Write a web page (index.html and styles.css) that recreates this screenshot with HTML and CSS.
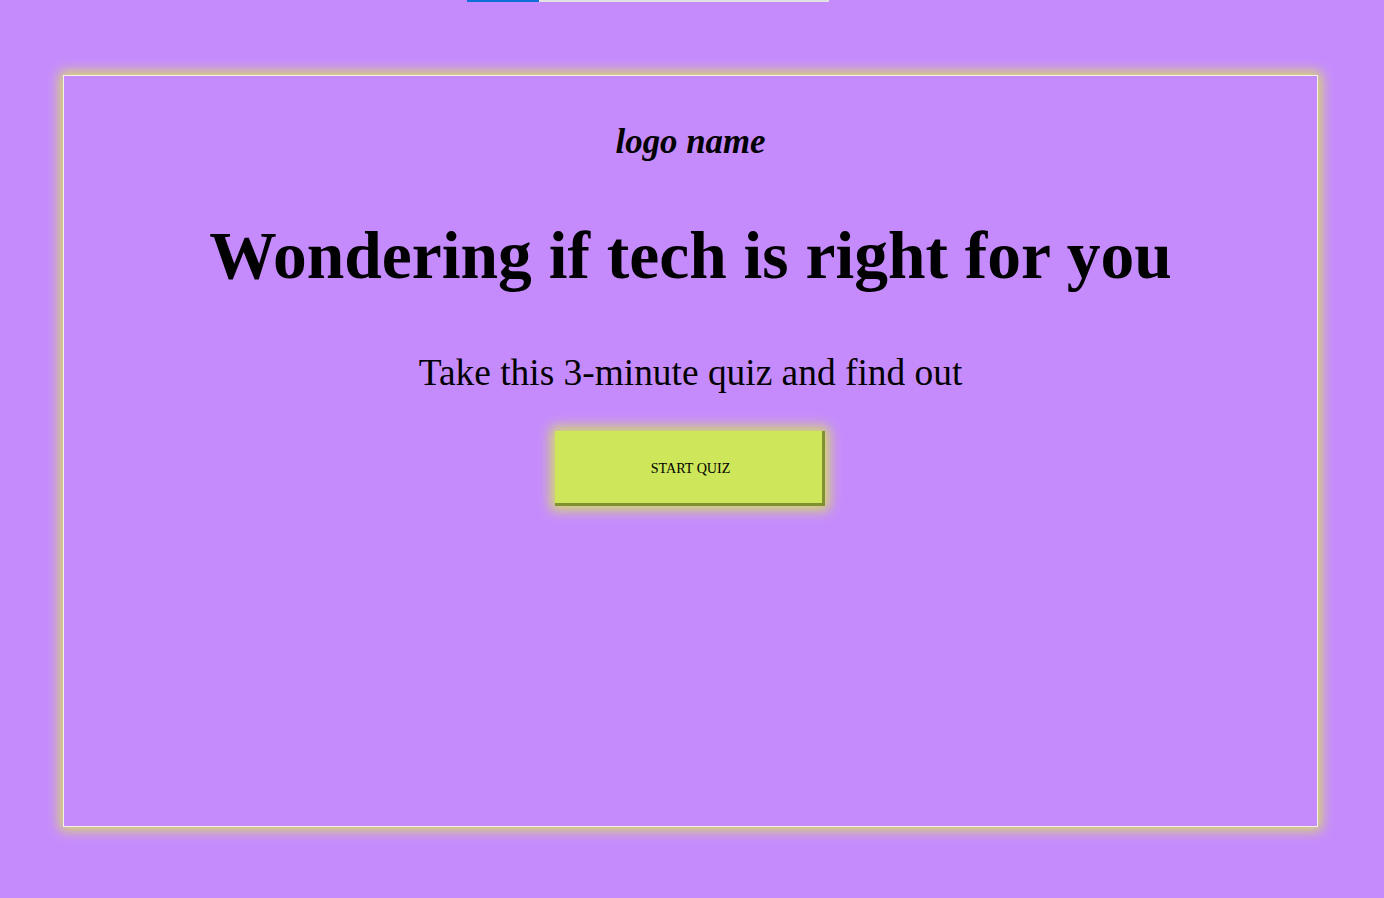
FILE: index.html
```html
<!DOCTYPE html>
<html lang="en">
<head>
<meta charset="utf-8">
<title>Quiz</title>
<link rel="stylesheet" href="styles.css">
</head>
<body>
<div class="progress"><div class="progress-fill" style="width:20%"></div></div>
<main class="card">
  <div class="logo">logo name</div>
  <h1 class="title">Wondering if tech is right for you</h1>
  <p class="subtitle">Take this 3-minute quiz and find out</p>
  <button class="start">START QUIZ</button>
</main>
</body>
</html>
```
FILE: styles.css
```css
html, body {
  margin: 0;
  padding: 0;
}
body {
  background: #c58bfd;
  font-family: "Liberation Serif", "Times New Roman", serif;
  color: #000;
  height: 898px;
  overflow: hidden;
}
.progress {
  width: 362px;
  height: 2px;
  margin-left: 467px;
  background: #e2e2e2;
}
.progress-fill {
  height: 100%;
  background: #0f6fd9;
}
.card {
  margin: 73px 0 0 63px;
  width: 1253px;
  height: 750px;
  border: 1px solid #f4f2e8;
  box-shadow: 0 0 12px 3px #dbe25a;
  display: flex;
  flex-direction: column;
  align-items: center;
  text-align: center;
}
.logo {
  font-size: 34.8px;
  font-weight: bold;
  font-style: italic;
  margin-top: 46px;
  line-height: 1.15;
}
.title {
  font-size: 67.5px;
  font-weight: bold;
  margin: 55px 0 0;
  line-height: 1.15;
}
.subtitle {
  font-size: 37.4px;
  margin: 56px 0 0;
  line-height: 1.15;
}
.start {
  box-sizing: border-box;
  margin-top: 37px;
  margin-right: 1px;
  width: 270px;
  height: 75px;
  border: none;
  border-right: 3px solid #7f9130;
  border-bottom: 3px solid #7f9130;
  padding: 4px 0 0 4px;
  background: #cde65a;
  font-family: "Liberation Serif", "Times New Roman", serif;
  font-size: 14.1px;
  color: #000;
  box-shadow: 0 0 12px 4px #d6e15e;
}
```
